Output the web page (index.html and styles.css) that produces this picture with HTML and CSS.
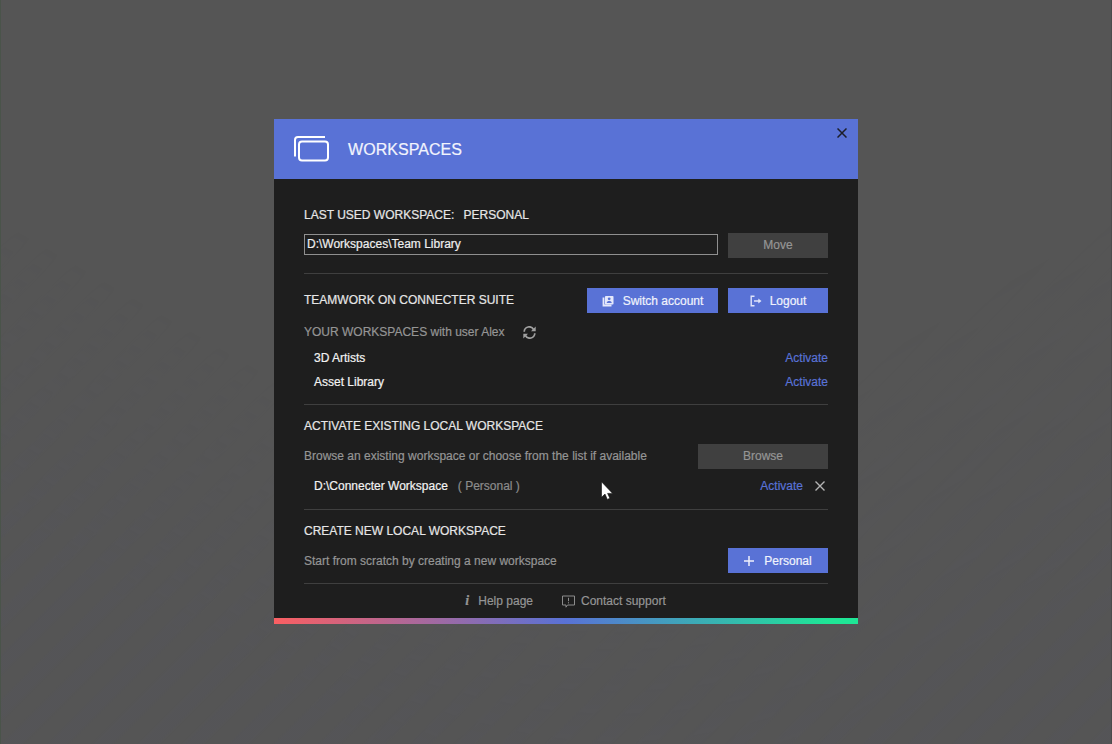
FILE: index.html
```html
<!DOCTYPE html>
<html lang="en">
<head>
    <meta charset="UTF-8">
    <meta name="viewport" content="width=device-width, initial-scale=1.0">
    <title>Workspaces</title>
    <link rel="stylesheet" href="styles.css">
</head>
<body>
    <div class="dialog">
        <div class="header">
            <svg class="logo" width="36" height="26" viewBox="0 0 36 26" fill="none" stroke="#fff" stroke-width="2">
                <path d="M1 20.500V4a3 3 0 0 1 3-3h27"/>
                <rect x="5" y="5.500" width="29" height="19" rx="3"/>
            </svg>
            <h1>WORKSPACES</h1>
            <button class="close" aria-label="Close">
                <svg width="10" height="10" viewBox="0 0 10 10" stroke="#1c1e2a" stroke-width="1.500"><path d="M0.500 0.500l9 9M9.500 0.500l-9 9"/></svg>
            </button>
        </div>

        <div class="content">
            <div class="section last-used">
                <h2>LAST USED WORKSPACE: <span class="current">PERSONAL</span></h2>
                <div class="row">
                    <input type="text" class="path" value="D:\Workspaces\Team Library">
                    <button class="btn gray">Move</button>
                </div>
            </div>

            <div class="section teamwork">
                <div class="row">
                    <h2>TEAMWORK ON CONNECTER SUITE</h2>
                    <button class="btn blue switch">
                        <svg width="12" height="12" viewBox="0 0 12 12">
                            <path d="M1.500 2.500v8h8" fill="none" stroke="#e4e8fb" stroke-width="1.800"/>
                            <rect x="3" y="1" width="8.500" height="8.500" rx="0.800" fill="#e4e8fb"/>
                            <circle cx="7.200" cy="3.800" r="1.400" fill="#5972d6"/>
                            <path d="M4.700 8c0-1.600 1.300-2 2.500-2s2.500 0.400 2.500 2z" fill="#5972d6"/>
                        </svg>
                        Switch account
                    </button>
                    <button class="btn blue logout">
                        <svg width="12" height="12" viewBox="0 0 12 12" fill="none" stroke="#dfe4fa" stroke-width="1.400">
                            <path d="M4.500 1.200H1.200v9.600h3.300M4 6h5.500"/>
                            <path d="M8.300 3.600L11.500 6 8.300 8.400z" fill="#dfe4fa" stroke="none"/>
                        </svg>
                        Logout
                    </button>
                </div>
                <div class="user">
                    YOUR WORKSPACES with user Alex
                    <svg width="13" height="13" viewBox="0 0 13 13" fill="none" stroke="#a0a0a0" stroke-width="1.700">
                        <path d="M1.200 5.700A5 5 0 0 1 10.600 3.500M11.800 7.300A5 5 0 0 1 2.400 9.500"/>
                        <path d="M12.700 0.600v4.700H8zM0.300 12.400V7.700H5z" fill="#a0a0a0" stroke="none"/>
                    </svg>
                </div>
                <ul class="workspaces">
                    <li>3D Artists <a href="#">Activate</a></li>
                    <li>Asset Library <a href="#">Activate</a></li>
                </ul>
            </div>

            <div class="section existing">
                <h2>ACTIVATE EXISTING LOCAL WORKSPACE</h2>
                <div class="row">
                    <p>Browse an existing workspace or choose from the list if available</p>
                    <button class="btn gray browse">Browse</button>
                </div>
                <ul class="workspaces">
                    <li>
                        D:\Connecter Workspace <span class="type">( Personal )</span>
                        <a href="#">Activate</a>
                        <svg class="remove" width="10" height="10" viewBox="0 0 10 10" stroke="#b4b4b4" stroke-width="1.400"><path d="M0.500 0.500l9 9M9.500 0.500l-9 9"/></svg>
                    </li>
                </ul>
            </div>

            <div class="section create">
                <h2>CREATE NEW LOCAL WORKSPACE</h2>
                <div class="row">
                    <p>Start from scratch by creating a new workspace</p>
                    <button class="btn blue personal">
                        <svg width="10" height="10" viewBox="0 0 10 10" stroke="#eef0fc" stroke-width="1.500"><path d="M5 0v10M0 5h10"/></svg>
                        Personal
                    </button>
                </div>
            </div>

            <div class="footer">
                <a href="#"><span class="info">i</span>Help page</a>
                <a href="#">
                    <svg width="13" height="13" viewBox="0 0 13 13" fill="none" stroke="#8c8c8c">
                        <path d="M0.500 1h12v9H5.500L4 12.200V10H0.500z"/>
                        <path d="M6.500 2.800v3.400M6.500 7.200v1.200"/>
                    </svg>
                    Contact support
                </a>
            </div>
        </div>
        <div class="rainbow"></div>
    </div>

    <svg class="cursor" width="12" height="19" viewBox="0 0 12 19"><path d="M0.500 0.800v15.500l3.500-3.200 2.300 5.300 2.600-1.100-2.300-4.900h5z" fill="#fff" stroke="#111" stroke-width="0.600"/></svg>
</body>
</html>
```
FILE: styles.css
```css
* {
    box-sizing: border-box;
}
body {
    margin: 0;
    height: 744px;
    padding-top: 119px;
    overflow: hidden;
    background: #555555;
    border-left: 1px solid #4a544a;
    border-right: 1px solid #4b4b4b;
    font-family: "Liberation Sans", Arial, sans-serif;
    font-size: 12px;
    line-height: 16px;
    color: #959595;
    -webkit-text-stroke: 0.2px;
}
/* faint diagonal stripes in the lower corners */
body::before {
    content: "";
    position: absolute;
    inset: 0;
    z-index: -1;
    background: repeating-linear-gradient(135deg, transparent 0 14px, rgba(84, 84, 100, 0.16) 18px 28px, transparent 32px);
    -webkit-mask-image: linear-gradient(30deg, #000 15%, transparent 38%), linear-gradient(-30deg, #000 10%, transparent 38%);
    mask-image: linear-gradient(30deg, #000 15%, transparent 38%), linear-gradient(-30deg, #000 10%, transparent 38%);
}
h1, h2, p, ul {
    margin: 0;
    padding: 0;
    font-weight: normal;
}
a {
    color: #5972d6;
    text-decoration: none;
}
button, input {
    font: inherit;
}
.dialog {
    width: 584px;
    height: 505px;
    margin-left: 273px;
    background: #1e1e1e;
    display: flex;
    flex-direction: column;
}
.header {
    height: 60px;
    flex: none;
    padding: 0 11px 0 20px;
    display: flex;
    align-items: center;
    background: #5972d6;
}
.header h1 {
    margin-left: 18px;
    padding-top: 1px;
    font-size: 16px;
    letter-spacing: 0.05px;
    color: #f2f4fd;
}
.close {
    align-self: flex-start;
    margin: 9px 0 0 auto;
    padding: 0;
    border: none;
    background: none;
    line-height: 0;
}
.content {
    flex: 1;
    padding: 0 30px;
}
.section {
    border-bottom: 1px solid #3f3f3f;
}
h2 {
    font-size: 12px;
    color: #e6e6e6;
}
.current {
    margin-left: 6px;
}
.row {
    display: flex;
    align-items: center;
    height: 25px;
    gap: 10px;
}
.last-used {
    height: 95px;
    padding-top: 28px;
}
.last-used .row {
    margin-top: 10px;
}
.path {
    flex: 1;
    height: 21px;
    margin-bottom: 2px;
    padding: 0 2px 1px;
    border: 1px solid #8f8f8f;
    background: #1e1e1e;
    color: #eeeeee;
}
.btn {
    display: flex;
    align-items: center;
    justify-content: center;
    width: 100px;
    height: 25px;
    padding: 0;
    border: none;
}
.gray {
    padding-bottom: 2px;
    background: #404040;
    color: #959595;
}
.blue {
    background: #5972d6;
    color: #f0f2fc;
}
.switch {
    width: 131px;
    gap: 9px;
}
.logout {
    gap: 8px;
}
.personal {
    gap: 10px;
}
.browse {
    width: 130px;
}
.row h2, .row p {
    margin-right: auto;
}
.teamwork {
    height: 131px;
    padding-top: 14px;
}
.teamwork h2, .existing p {
    padding-bottom: 2px;
}
.user {
    display: flex;
    align-items: center;
    gap: 18px;
    margin-top: 11px;
}
.workspaces {
    list-style: none;
    padding-left: 10px;
}
.workspaces li {
    display: flex;
    align-items: center;
    height: 24px;
    color: #f2f2f2;
}
.workspaces a {
    margin-left: auto;
}
.teamwork .workspaces {
    margin-top: 6px;
}
.existing {
    height: 105px;
    padding-top: 13px;
}
.existing .row {
    margin-top: 10px;
}
.existing .workspaces {
    margin-top: 5px;
}
.type {
    margin-left: 10px;
    color: #8c8c8c;
}
.remove {
    margin: 0 3px 0 12px;
}
.create {
    height: 74px;
    padding-top: 13px;
}
.create .row {
    margin-top: 9px;
}
.footer {
    display: flex;
    justify-content: center;
    gap: 29px;
    padding: 9px 1px 0 0;
}
.footer a {
    display: flex;
    align-items: center;
    gap: 6px;
    color: #959595;
}
.info {
    font: italic bold 14px/16px "Liberation Serif", "Times New Roman", serif;
    width: 7px;
}
.rainbow {
    height: 6px;
    background: linear-gradient(to right, #fa5f62, #5972d6 50%, #1fe596 95%);
}
.cursor {
    position: absolute;
    left: 601px;
    top: 481px;
}
```
